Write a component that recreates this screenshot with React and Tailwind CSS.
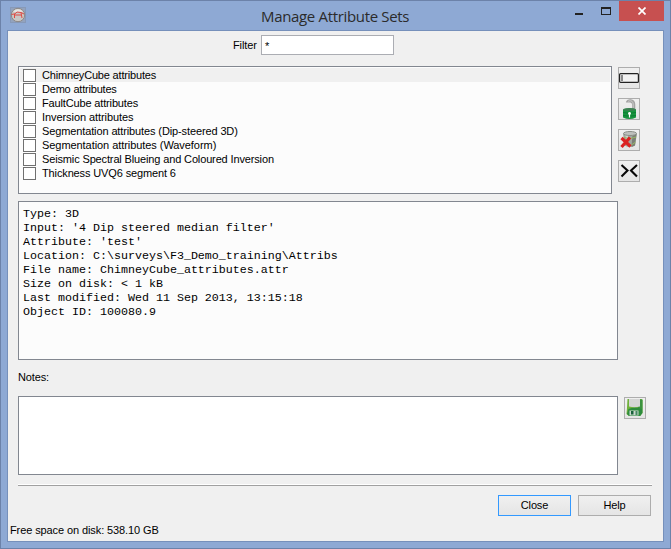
const ATTRIBUTE_SETS = [
  { name: 'ChimneyCube attributes', tracking: 'tracking-[-0.18px]' },
  { name: 'Demo attributes', tracking: 'tracking-[-0.2px]' },
  { name: 'FaultCube attributes', tracking: 'tracking-[-0.15px]' },
  { name: 'Inversion attributes', tracking: 'tracking-[-0.07px]' },
  { name: 'Segmentation attributes (Dip-steered 3D)', tracking: 'tracking-[-0.12px]' },
  { name: 'Segmentation attributes (Waveform)', tracking: 'tracking-[-0.06px]' },
  { name: 'Seismic Spectral Blueing and Coloured Inversion', tracking: 'tracking-[-0.14px]' },
  { name: 'Thickness UVQ6 segment 6', tracking: 'tracking-[-0.13px]' },
];

const INFO = [
  'Type: 3D',
  "Input: '4 Dip steered median filter'",
  "Attribute: 'test'",
  'Location: C:\\surveys\\F3_Demo_training\\Attribs',
  'File name: ChimneyCube_attributes.attr',
  'Size on disk: < 1 kB',
  'Last modified: Wed 11 Sep 2013, 13:15:18',
  'Object ID: 100080.9',
];

function AppIcon() {
  return (
    <svg width="16" height="16" viewBox="0 0 16 16">
      <rect x="0.5" y="0.5" width="15" height="15" fill="#93a3bd" stroke="#8799b8" />
      <circle cx="8" cy="8" r="6.7" fill="#c9c7c4" stroke="#8d8886" />
      <path d="M3 4.5Q8 0 13 4.5L11 5H5Z" fill="#e6e5e3" />
      <path d="M1.500 7.500 5 6.800 7 5 11 5.500 14 7M4.500 7V11M11 5.500 12 11M5 8H11" fill="none" stroke="#e04a44" />
    </svg>
  );
}

function RenameIcon() {
  return (
    <svg width="20" height="20" viewBox="0 0 20 20">
      <rect x="0.600" y="5.600" width="18.800" height="8.800" rx="1" fill="#f2f2f2" stroke="#222" strokeWidth="1.200" />
      <path d="M3 7V13" stroke="#8a8a8a" strokeWidth="2" />
    </svg>
  );
}

function UnlockIcon() {
  return (
    <svg width="20" height="20" viewBox="0 0 20 20">
      <path d="M8.500 3.500C8.500 1.200 14.500 .8 14.700 5.500V10" fill="none" stroke="#a3a3a3" strokeWidth="3.200" />
      <path d="M9 2.700C10.500 1 14 1.500 14.200 5V9" fill="none" stroke="#cbcbcb" />
      <path d="M4 10.500Q10.500 8 17 10.500V18.500Q10.500 21.500 4 18.500Z" fill="#17953f" />
      <ellipse cx="10.500" cy="10.500" rx="6.500" ry="1.500" fill="#3d7f52" />
      <path d="M4 13.500Q10.500 15 17 13.500M4 16.500Q10.500 18 17 16.500" fill="none" stroke="#0b7c32" />
      <path d="M10.500 14V18.500" stroke="#fff" strokeWidth="1.200" />
      <circle cx="10.500" cy="14.500" r="1.400" fill="#fff" />
    </svg>
  );
}

function RemoveIcon() {
  return (
    <svg width="20" height="20" viewBox="0 0 20 20">
      <path d="M4 3.500 5.500 15.500Q11 18.500 16 15.500L18 3.500Z" fill="#a3a79f" />
      <path d="M13.500 5 12.500 17 16 15.500 17.500 4Z" fill="#7c8078" />
      <path d="M7.500 5 8.500 10" stroke="#cfd1cd" strokeWidth="2.500" />
      <ellipse cx="11" cy="3.500" rx="6.500" ry="2" fill="#bfc1be" stroke="#8a8e87" />
      <path d="M5 7.500Q11 10 17 7M12.500 15 16.500 12" fill="none" stroke="#96b960" />
      <path d="M2.500 8 11.500 16.500M11 7.500 2.500 17" stroke="#db2222" strokeWidth="3.200" />
    </svg>
  );
}

function MergeIcon() {
  return (
    <svg width="20" height="20" viewBox="0 0 20 20">
      <path d="M2.500 4 8.500 9.500 2.500 15.500M18 4 12 9.500 18 15.500" fill="none" stroke="#080808" strokeWidth="2.100" />
    </svg>
  );
}

function SaveIcon() {
  return (
    <svg width="20" height="20" viewBox="0 0 20 20">
      <path d="M2.500 1H16.500L17.500 2V15L15 18H4L1.500 16L2 10Z" fill="#70b13b" />
      <path d="M14.500 1.500H17.500V15L15 18H11Z" fill="#3b923f" />
      <path d="M3.500 11Q9.500 8 17 11V15L15 18H4L2 16Z" fill="#2d8c3d" />
      <path d="M4 1H15V8.500Q9.500 10 4 8.500Z" fill="#d5d6d5" />
      <rect x="4.500" y="12.500" width="9" height="5" fill="#cbd8cd" />
      <rect x="6" y="13" width="2.500" height="3.500" fill="#17613a" />
      <rect x="10.500" y="13" width="2" height="4" fill="#478a63" />
    </svg>
  );
}

function ToolButton({ label, children }) {
  return (
    <button
      aria-label={label}
      className="flex h-[22px] w-[22px] shrink-0 items-center justify-center border border-[#adadad] bg-linear-to-b from-[#f0f0f0] to-[#e5e5e5]"
    >
      {children}
    </button>
  );
}

export default function App() {
  return (
    <div className="flex h-[549px] w-[671px] flex-col overflow-hidden border border-[#6c82a9] bg-[#8ea9d4] px-[6px] pb-[6px] font-['Liberation_Sans',Arial,sans-serif] text-[11px] leading-[14px] text-black">
      <header className="flex h-[29px] shrink-0 items-start">
        <div className="w-[188px] pt-[6px] pl-[3px]">
          <AppIcon />
        </div>
        <h1 className="flex-1 pt-[5px] pl-[66px] font-['Open_Sans',sans-serif] text-[15px] leading-[20px] tracking-[-0.33px] whitespace-nowrap text-[#2b2b2b]">
          Manage Attribute Sets
        </h1>
        <div className="flex items-start">
          <button aria-label="Minimize" className="mt-[12px] mr-[18px] h-[2px] w-[8px] bg-[#222]" />
          <button aria-label="Maximize" className="mt-[6px] mr-[8px] h-[8px] w-[10px] border border-t-2 border-[#222]" />
          <button aria-label="Close window" className="flex h-[20px] w-[45px] items-center justify-center bg-[#c75050]">
            <svg width="8" height="8" viewBox="0 0 8 8">
              <path d="M.5 .5 7.500 7.500M7.500 .5 .5 7.500" stroke="#fff" strokeWidth="1.700" />
            </svg>
          </button>
        </div>
      </header>

      <main className="flex min-h-0 flex-1 flex-col border border-[#7690bb] bg-[#f0f0f0] pl-[10px]">
        <div className="mt-[4px] flex h-[20px] items-center pl-[215px]">
          <label className="w-[28px] tracking-[-0.1px]">Filter</label>
          <div className="h-[20px] w-[133px] border border-[#abadb3] bg-white pt-[3px] pl-[3px]">*</div>
        </div>

        <div className="mt-[11px] flex h-[128px] shrink-0">
          <ul className="w-[594px] border border-[#828790] bg-[#fcfcfc] p-px">
            {ATTRIBUTE_SETS.map(({ name, tracking }, index) => (
              <li key={name} className={`flex h-[14px] pl-[3px] ${index === 0 ? 'bg-[#f0f0f0]' : ''}`}>
                <span className="mt-px h-[13px] w-[13px] border border-[#707070] bg-white" />
                <span className={`pl-[6px] leading-[15px] whitespace-nowrap ${tracking}`}>{name}</span>
              </li>
            ))}
          </ul>
          <div className="flex flex-col gap-[9px] pt-px pl-[6px]">
            <ToolButton label="Rename"><RenameIcon /></ToolButton>
            <ToolButton label="Unlock"><UnlockIcon /></ToolButton>
            <ToolButton label="Remove"><RemoveIcon /></ToolButton>
            <ToolButton label="Merge"><MergeIcon /></ToolButton>
          </div>
        </div>

        <div className="mt-[7px] h-[159px] w-[600px] shrink-0 border border-[#828790] bg-[#fcfcfc] pt-[5px] pl-[4px] font-['Liberation_Mono','Courier_New',monospace] text-[11.665px] leading-[14px] whitespace-pre">
          {INFO.map((line) => (
            <div key={line}>{line}</div>
          ))}
        </div>

        <div className="mt-[10px] h-[14px] shrink-0 tracking-[-0.15px]">Notes:</div>

        <div className="mt-[12px] flex h-[79px] shrink-0">
          <div className="w-[600px] border border-[#828790] bg-white" />
          <div className="pt-px pl-[6px]">
            <ToolButton label="Save notes"><SaveIcon /></ToolButton>
          </div>
        </div>

        <div className="mt-[9px] h-[2px] w-[634px] shrink-0 border-t border-b border-t-white border-b-[#a0a0a0]" />

        <div className="mt-[9px] flex shrink-0 gap-[7px] pl-[480px]">
          <button className="h-[21px] w-[73px] border border-[#3399ff] bg-linear-to-b from-[#f0f0f0] to-[#e5e5e5] pb-px tracking-[-0.15px]">Close</button>
          <button className="h-[21px] w-[73px] border border-[#adadad] bg-linear-to-b from-[#f0f0f0] to-[#e5e5e5] pb-px tracking-[-0.15px]">Help</button>
        </div>

        <div className="mt-[7px] -ml-[8px] h-[14px] shrink-0 tracking-[-0.1px]">Free space on disk: 538.10 GB</div>
      </main>
    </div>
  );
}
